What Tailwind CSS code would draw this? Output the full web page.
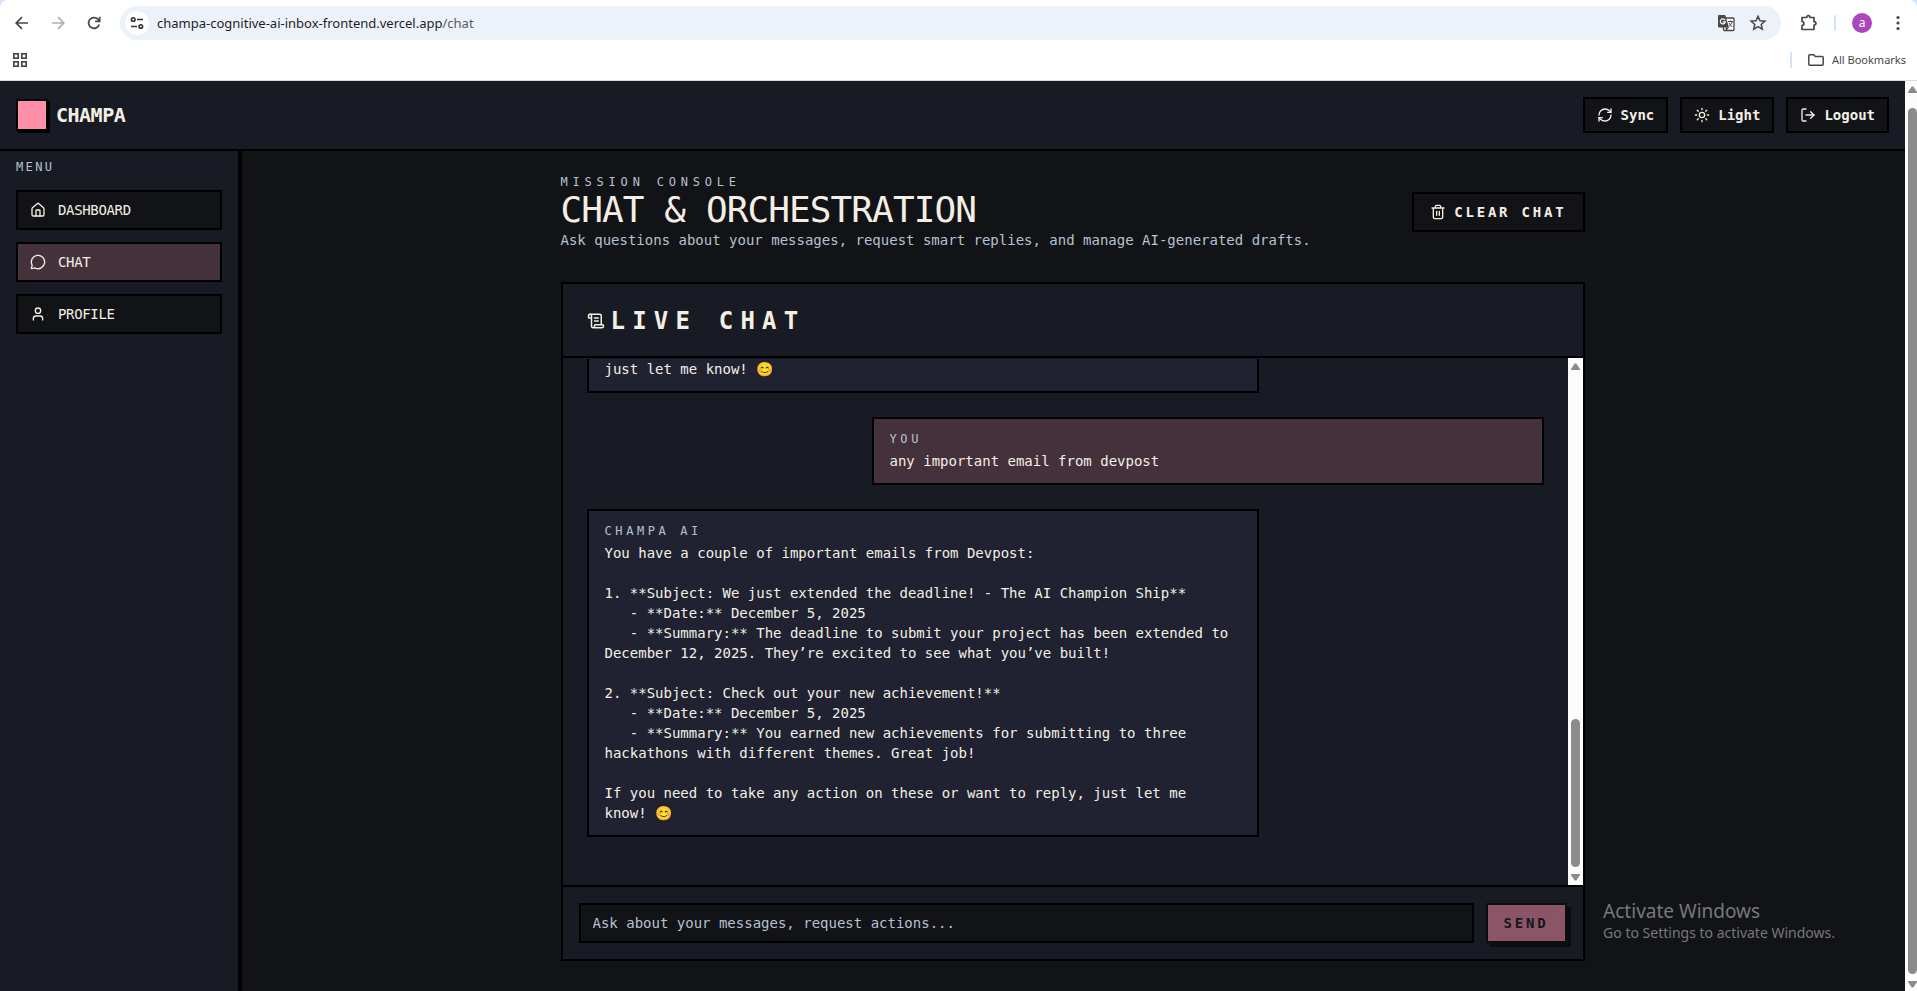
<!DOCTYPE html>
<html lang="en">
<head>
  <meta charset="UTF-8">
  <meta name="viewport" content="width=device-width, initial-scale=1.0">
  <script src="https://cdn.jsdelivr.net/npm/@tailwindcss/browser@4"></script>
  <title>Champa</title>
</head>
<body class="h-screen flex flex-col overflow-hidden bg-[#d3e3fd] font-['DejaVu_Sans_Mono',monospace] text-sm text-[#f4efe4]">

  <!-- browser bar -->
  <div class="shrink-0 bg-white rounded-t-lg border-b border-[#d5ddd8] font-['Noto_Sans',sans-serif] text-[#1f1f1f]">
    <div class="h-[46px] flex items-center pl-3 pr-[9px]">
      <div class="flex items-center gap-4 text-[#474747]">
        <button aria-label="Back">
          <svg class="size-5" viewBox="0 0 20 20" fill="none" stroke="currentColor" stroke-width="1.7"><path d="M16 10H4.5M10 4.2 4.2 10l5.8 5.8"/></svg>
        </button>
        <button aria-label="Forward" class="text-[#b0b0b0]">
          <svg class="size-5" viewBox="0 0 20 20" fill="none" stroke="currentColor" stroke-width="1.7"><path d="M4 10h11.5M10 4.2l5.8 5.8-5.8 5.8"/></svg>
        </button>
        <button aria-label="Reload">
          <svg class="size-5" viewBox="0 0 20 20" fill="none" stroke="currentColor" stroke-width="1.7"><path d="M15.2 11.4a5.4 5.4 0 1 1-1.3-5.2L15.5 7.8M15.7 3.8v4.5h-4.5"/></svg>
        </button>
      </div>
      <div class="ml-4 flex-1 h-[34px] flex items-center rounded-full bg-[#ecf1fa] pl-[5px] pr-[14px]">
        <button aria-label="Site information" class="size-6 rounded-full bg-white flex items-center justify-center">
          <svg class="size-4" viewBox="0 0 16 16" fill="none" stroke="#303134" stroke-width="1.6"><circle cx="4.2" cy="4.5" r="1.8"/><path d="M8 4.5h6M2 11.5h6"/><circle cx="11.8" cy="11.5" r="1.8"/></svg>
        </button>
        <p class="ml-2 flex-1 text-[13px]">champa-cognitive-ai-inbox-frontend.vercel.app<span class="text-[#5a5d61]">/chat</span></p>
        <div class="flex items-center gap-[14px] text-[#474747]">
          <button aria-label="Translate">
            <svg class="size-[18px]" viewBox="0 0 18 18" fill="none"><rect x="6.5" y="4" width="10.5" height="12.5" rx="1" fill="#fff" stroke="currentColor" stroke-width="1.3"/><path d="M1 2.2C1 1.5 1.5 1 2.2 1h6L12 13.500H2.2C1.5 13.500 1 13 1 12.300z" fill="currentColor"/><path d="M9 17l3-3.500H8.500z" fill="currentColor"/><path d="M8 6.100a2.500 2.500 0 1 0 .3 1.700H5.800" stroke="#fff" stroke-width="1.2"/><path d="M11 7.500h5M13.500 6.500v1M15.200 7.500c-.5 2-1.700 3.500-3 4.500M12 8.800c.7 1.500 1.900 3 3.200 4.200" stroke="currentColor"/></svg>
          </button>
          <button aria-label="Bookmark this tab">
            <svg class="size-[18px]" viewBox="0 0 18 18" fill="none" stroke="currentColor" stroke-width="1.5"><path d="M9 2.300l2 4.500 4.900.4-3.700 3.200 1.100 4.800L9 12.700l-4.300 2.500 1.100-4.800-3.700-3.200 4.900-.4z"/></svg>
          </button>
        </div>
      </div>
      <div class="flex items-center text-[#474747]">
        <button aria-label="Extensions" class="ml-[18px]">
          <svg class="size-5" viewBox="0 0 20 20" fill="none" stroke="currentColor" stroke-width="1.7" stroke-linejoin="round"><path d="M3 4.500h4.700c0-2.500 3.300-2.500 3.300 0h4v4.200c2.600 0 2.600 3.300 0 3.300v4.500H3v-4c2.600-.3 2.600-3.700 0-4z"/></svg>
        </button>
        <span class="ml-[15px] w-[2px] h-4 rounded bg-[#d3e3fd]"></span>
        <button class="ml-4 size-5 rounded-full bg-[#ab47bc] text-white text-xs leading-5">a</button>
        <button aria-label="Menu" class="ml-4">
          <svg class="size-5" viewBox="0 0 20 20" fill="currentColor"><circle cx="10" cy="4.500" r="1.600"/><circle cx="10" cy="10" r="1.600"/><circle cx="10" cy="15.500" r="1.600"/></svg>
        </button>
      </div>
    </div>
    <div class="h-7 mb-[6px] flex items-center justify-between pl-3 pr-[11px] text-[#474747]">
      <button aria-label="Apps">
        <svg class="size-4" viewBox="0 0 16 16" fill="none" stroke="currentColor" stroke-width="1.7"><rect x="1.8" y="1.8" width="4.4" height="4.4"/><rect x="9.800" y="1.8" width="4.4" height="4.4"/><rect x="1.8" y="9.8" width="4.4" height="4.4"/><rect x="9.8" y="9.8" width="4.4" height="4.4"/></svg>
      </button>
      <div class="flex items-center">
        <span class="w-[2px] h-4 rounded bg-[#d3e3fd]"></span>
        <button class="ml-4 flex items-center gap-2 text-[11px]">
          <svg class="w-4 h-3" viewBox="0 0 16 12" fill="none" stroke="currentColor" stroke-width="1.5"><path d="M.8 1.8c0-.6.4-1 1-1h4l1.500 1.700h6.900c.6 0 1 .4 1 1v6.700c0 .6-.4 1-1 1H1.800c-.6 0-1-.4-1-1z"/></svg>
          All Bookmarks
        </button>
      </div>
    </div>
  </div>

  <div class="flex-1 min-h-0 flex">
    <div class="flex-1 min-w-0 flex flex-col bg-[#121317]">

      <header class="shrink-0 flex items-center justify-between p-4 bg-[#191b24] border-b-2 border-black">
        <div class="flex items-center gap-2">
          <span class="size-8 bg-[#ff8fa9] border-2 border-black shadow-[2px_2px_0_#000]"></span>
          <span class="text-xl leading-7 font-bold tracking-tight">CHAMPA</span>
        </div>
        <div class="flex gap-3 font-bold">
          <button class="h-9 px-3 flex items-center gap-2 bg-[#121317] border-2 border-black">
            <svg class="size-4" viewBox="0 0 24 24" fill="none" stroke="currentColor" stroke-width="2" stroke-linecap="round" stroke-linejoin="round"><path d="M3 12a9 9 0 0 1 9-9 9.750 9.750 0 0 1 6.740 2.740L21 8"/><path d="M21 3v5h-5"/><path d="M21 12a9 9 0 0 1-9 9 9.750 9.750 0 0 1-6.740-2.740L3 16"/><path d="M8 16H3v5"/></svg>
            Sync
          </button>
          <button class="h-9 px-3 flex items-center gap-2 bg-[#121317] border-2 border-black">
            <svg class="size-4" viewBox="0 0 24 24" fill="none" stroke="currentColor" stroke-width="2" stroke-linecap="round" stroke-linejoin="round"><circle cx="12" cy="12" r="4"/><path d="M12 2v2M12 20v2M4.930 4.930l1.410 1.410M17.660 17.660l1.410 1.410M2 12h2M20 12h2M6.340 17.660l-1.410 1.410M19.070 4.930l-1.410 1.410"/></svg>
            Light
          </button>
          <button class="h-9 px-3 flex items-center gap-2 bg-[#121317] border-2 border-black">
            <svg class="size-4" viewBox="0 0 24 24" fill="none" stroke="currentColor" stroke-width="2" stroke-linecap="round" stroke-linejoin="round"><path d="M9 21H5a2 2 0 0 1-2-2V5a2 2 0 0 1 2-2h4"/><path d="m16 17 5-5-5-5"/><path d="M21 12H9"/></svg>
            Logout
          </button>
        </div>
      </header>

      <div class="flex-1 min-h-0 flex">
        <aside class="w-[242px] shrink-0 bg-[#191b24] border-r-4 border-black px-4 pt-2">
          <p class="text-xs tracking-[0.2em] text-[#b8c1d1]">MENU</p>
          <nav class="mt-[15px] flex flex-col gap-3 tracking-tight">
            <a href="#" class="h-10 px-3 flex items-center gap-3 bg-[#121317] border-2 border-black">
              <svg class="size-4" viewBox="0 0 24 24" fill="none" stroke="currentColor" stroke-width="2" stroke-linecap="round" stroke-linejoin="round"><path d="M15 21v-8a1 1 0 0 0-1-1h-4a1 1 0 0 0-1 1v8"/><path d="M3 10a2 2 0 0 1 .709-1.528l7-5.999a2 2 0 0 1 2.582 0l7 5.999A2 2 0 0 1 21 10v9a2 2 0 0 1-2 2H5a2 2 0 0 1-2-2z"/></svg>
              DASHBOARD
            </a>
            <a href="#" class="h-10 px-3 flex items-center gap-3 bg-[#45313b] border-2 border-black">
              <svg class="size-4" viewBox="0 0 24 24" fill="none" stroke="currentColor" stroke-width="2" stroke-linecap="round" stroke-linejoin="round"><path d="M2.992 16.342a2 2 0 0 1 .094 1.167l-1.065 3.290a1 1 0 0 0 1.236 1.168l3.413-.998a2 2 0 0 1 1.099.092 10 10 0 1 0-4.777-4.719"/></svg>
              CHAT
            </a>
            <a href="#" class="h-10 px-3 flex items-center gap-3 bg-[#121317] border-2 border-black">
              <svg class="size-4" viewBox="0 0 24 24" fill="none" stroke="currentColor" stroke-width="2" stroke-linecap="round" stroke-linejoin="round"><path d="M19 21v-2a4 4 0 0 0-4-4H9a4 4 0 0 0-4 4v2"/><circle cx="12" cy="7" r="4"/></svg>
              PROFILE
            </a>
          </nav>
        </aside>

        <main class="flex-1 min-w-0 pl-6 pr-[26px] pt-[23px] pb-[30px]">
          <div class="max-w-5xl mx-auto h-full flex flex-col gap-8">
            <div class="flex items-center justify-between">
              <div>
                <p class="text-xs tracking-[0.4em] text-[#b8c1d1]">MISSION CONSOLE</p>
                <h1 class="text-4xl tracking-tight">CHAT &amp; ORCHESTRATION</h1>
                <p class="text-[#b8c1d1]">Ask questions about your messages, request smart replies, and manage AI-generated drafts.</p>
              </div>
              <button class="h-10 px-4 flex items-center gap-2 border-2 border-black font-bold tracking-[0.2em]">
                <svg class="size-4" viewBox="0 0 24 24" fill="none" stroke="currentColor" stroke-width="2" stroke-linecap="round" stroke-linejoin="round"><path d="M3 6h18M19 6v14a2 2 0 0 1-2 2H7a2 2 0 0 1-2-2V6M8 6V4a2 2 0 0 1 2-2h4a2 2 0 0 1 2 2v2M10 11v6M14 11v6"/></svg>
                CLEAR CHAT
              </button>
            </div>

            <section class="flex-1 min-h-0 flex flex-col bg-[#191b24] border-2 border-black">
              <div class="px-6 pt-[25px] pb-[23px] flex items-center gap-[6px] border-b-2 border-black">
                <svg class="size-[18px]" viewBox="0 0 24 24" fill="none" stroke="currentColor" stroke-width="2" stroke-linecap="round" stroke-linejoin="round"><path d="M15 12h-5M15 8h-5M19 17V5a2 2 0 0 0-2-2H4"/><path d="M8 21h12a2 2 0 0 0 2-2v-1a1 1 0 0 0-1-1H11a1 1 0 0 0-1 1v1a2 2 0 1 1-4 0V5a2 2 0 1 0-4 0v2a1 1 0 0 0 1 1h3"/></svg>
                <h2 class="text-2xl leading-none font-bold tracking-[0.3em]">LIVE CHAT</h2>
              </div>

              <div class="flex-1 min-h-0 flex">
                <div class="flex-1 min-h-0 overflow-hidden flex flex-col justify-end gap-6 px-6 pb-12">
                  <div class="w-full max-w-2xl bg-[#202231] border-2 border-t-0 border-black px-4 pb-3">
                    <p>just let me know! 😊</p>
                  </div>
                  <div class="w-full max-w-2xl self-end bg-[#45313b] border-2 border-black px-4 py-3">
                    <p class="text-xs tracking-[0.3em] text-[#b8c1d1]">YOU</p>
                    <p class="mt-1">any important email from devpost</p>
                  </div>
                  <div class="w-full max-w-2xl bg-[#202231] border-2 border-black px-4 py-3">
                    <p class="text-xs tracking-[0.3em] text-[#b8c1d1]">CHAMPA AI</p>
                    <p class="mt-1 whitespace-pre-wrap">You have a couple of important emails from Devpost:

1. **Subject: We just extended the deadline! - The AI Champion Ship**
   - **Date:** December 5, 2025
   - **Summary:** The deadline to submit your project has been extended to
December 12, 2025. They’re excited to see what you’ve built!

2. **Subject: Check out your new achievement!**
   - **Date:** December 5, 2025
   - **Summary:** You earned new achievements for submitting to three
hackathons with different themes. Great job!

If you need to take any action on these or want to reply, just let me
know! 😊</p>
                  </div>
                </div>
                <div class="w-[15px] flex flex-col items-center justify-between bg-[#fcfcfc] pt-[5px] pb-1">
                  <svg class="w-[9px] h-[7px]" viewBox="0 0 9 7" fill="#8b8b8b"><path d="M3.700.5h1.600L9 6v1H0V6z"/></svg>
                  <div class="flex-1 w-[9px] flex flex-col justify-end pb-[7px]">
                    <div class="h-[148px] rounded-full bg-[#8b8b8b]"></div>
                  </div>
                  <svg class="w-[9px] h-[7px]" viewBox="0 0 9 7" fill="#8b8b8b"><path d="M3.700 6.500h1.600L9 1V0H0v1z"/></svg>
                </div>
              </div>

              <form class="flex gap-3 p-4 border-t-2 border-black">
                <input type="text" aria-label="Message" placeholder="Ask about your messages, request actions..." class="flex-1 min-w-0 h-10 px-3 bg-[#121317] border-2 border-black placeholder:text-[#b8c1d1]">
                <button type="button" class="h-10 px-4 bg-[#ff8fa9] border-2 border-black shadow-[4px_4px_0_#000] text-[#121317] font-bold tracking-[0.2em] opacity-50">SEND</button>
              </form>
            </section>
          </div>
        </main>
      </div>
    </div>

    <!-- page scrollbar -->
    <div class="w-3 shrink-0 pl-[3px] pt-[5px] pb-[3px] flex flex-col bg-[#fcfcfc]">
      <svg class="w-[9px] h-[7px] shrink-0" viewBox="0 0 9 7" fill="#8b8b8b"><path d="M3.700.5h1.600L9 6v1H0V6z"/></svg>
      <div class="flex-1 mt-[15px] mb-[7px] rounded-full bg-[#8b8b8b]"></div>
      <svg class="w-[9px] h-[7px] shrink-0" viewBox="0 0 9 7" fill="#8b8b8b"><path d="M3.700 6.500h1.600L9 1V0H0v1z"/></svg>
    </div>
  </div>

  <!-- windows watermark -->
  <div class="absolute right-[82px] bottom-12 font-['Noto_Sans',sans-serif] text-[#77787b]">
    <p class="text-[19px] leading-6">Activate Windows</p>
    <p class="text-sm leading-5">Go to Settings to activate Windows.</p>
  </div>
</body>
</html>
